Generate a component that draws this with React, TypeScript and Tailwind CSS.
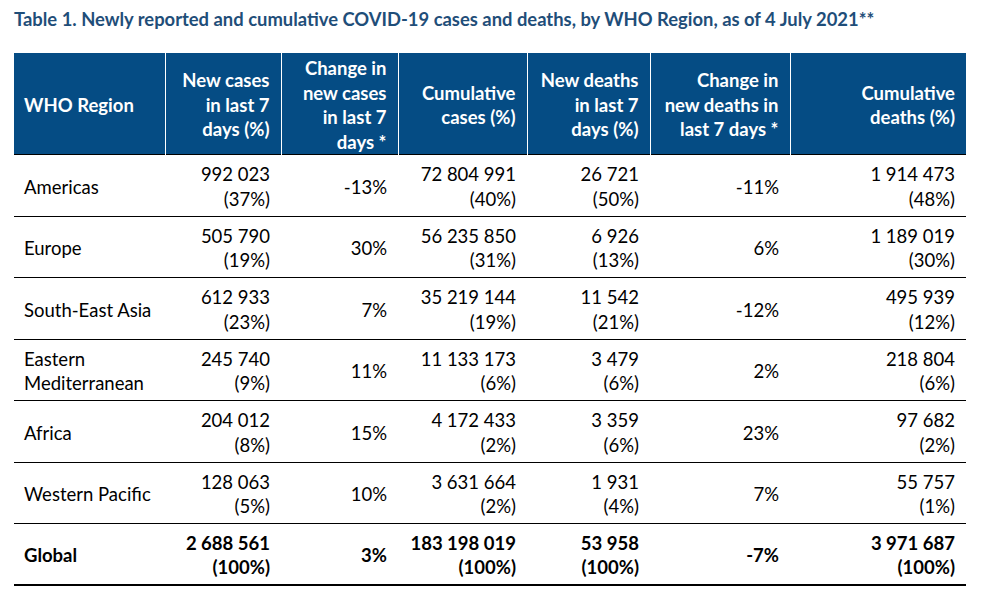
const rows = [
  { region: ['Americas'], nc: '992 023', ncp: '(37%)', chc: '-13%', cc: '72 804 991', ccp: '(40%)', nd: '26 721', ndp: '(50%)', chd: '-11%', cd: '1 914 473', cdp: '(48%)' },
  { region: ['Europe'], nc: '505 790', ncp: '(19%)', chc: '30%', cc: '56 235 850', ccp: '(31%)', nd: '6 926', ndp: '(13%)', chd: '6%', cd: '1 189 019', cdp: '(30%)' },
  { region: ['South-East Asia'], nc: '612 933', ncp: '(23%)', chc: '7%', cc: '35 219 144', ccp: '(19%)', nd: '11 542', ndp: '(21%)', chd: '-12%', cd: '495 939', cdp: '(12%)' },
  { region: ['Eastern', 'Mediterranean'], nc: '245 740', ncp: '(9%)', chc: '11%', cc: '11 133 173', ccp: '(6%)', nd: '3 479', ndp: '(6%)', chd: '2%', cd: '218 804', cdp: '(6%)' },
  { region: ['Africa'], nc: '204 012', ncp: '(8%)', chc: '15%', cc: '4 172 433', ccp: '(2%)', nd: '3 359', ndp: '(6%)', chd: '23%', cd: '97 682', cdp: '(2%)' },
  { region: ['Western Pacific'], nc: '128 063', ncp: '(5%)', chc: '10%', cc: '3 631 664', ccp: '(2%)', nd: '1 931', ndp: '(4%)', chd: '7%', cd: '55 757', cdp: '(1%)' },
];

const headers = [
  ['WHO Region'],
  ['New cases', 'in last 7', 'days (%)'],
  ['Change in', 'new cases', 'in last 7', 'days *'],
  ['Cumulative', 'cases (%)'],
  ['New deaths', 'in last 7', 'days (%)'],
  ['Change in', 'new deaths in', 'last 7 days *'],
  ['Cumulative', 'deaths (%)'],
];

const widths = ['w-[151px]', 'w-[116px]', 'w-[117px]', 'w-[129px]', 'w-[123px]', 'w-[140px]', 'w-[176px]'];

function Two({ a, b }: { a: string; b: string }) {
  return (
    <div className="flex flex-col items-end">
      <span>{a}</span>
      <span>{b}</span>
    </div>
  );
}

export default function App() {
  return (
    <div className="bg-white w-[983px] h-[589px] font-['Lato','Liberation_Sans',sans-serif] text-black">
      <h1 className="pl-[14px] pt-[8px] h-[53px] text-[18.4px] leading-[22px] font-bold text-[#1f4e79]">
        Table 1. Newly reported and cumulative COVID-19 cases and deaths, by WHO Region, as of 4 July 2021**
      </h1>
      <table className="ml-[14px] table-fixed border-collapse text-[18.5px] leading-[24.5px]">
        <thead>
          <tr className="h-[101px] bg-[#054c84] text-white font-bold border-b border-black">
            {headers.map((h, i) => (
              <th
                key={i}
                className={`${widths[i]} ${i === 0 ? 'text-left pl-[10px]' : 'text-right pr-[11px]'} ${i < 6 ? 'border-r border-white' : ''} pt-[3px] font-bold align-middle`}
              >
                {h.map((l) => (
                  <div key={l}>{l}</div>
                ))}
              </th>
            ))}
          </tr>
        </thead>
        <tbody>
          {rows.map((r) => (
            <tr key={r.region[0]} className="h-[61.5px] border-b border-black [&>td]:pt-[3px]">
              <td className="pl-[10px] align-middle">
                {r.region.map((l) => (
                  <div key={l}>{l}</div>
                ))}
              </td>
              <td className="pr-[11px]"><Two a={r.nc} b={r.ncp} /></td>
              <td className="pr-[11px] text-right">{r.chc}</td>
              <td className="pr-[11px]"><Two a={r.cc} b={r.ccp} /></td>
              <td className="pr-[11px]"><Two a={r.nd} b={r.ndp} /></td>
              <td className="pr-[11px] text-right">{r.chd}</td>
              <td className="pr-[11px]"><Two a={r.cd} b={r.cdp} /></td>
            </tr>
          ))}
          <tr className="h-[61px] border-b-2 border-black font-bold [&>td]:pt-[3px]">
            <td className="pl-[10px]">Global</td>
            <td className="pr-[11px]"><Two a="2 688 561" b="(100%)" /></td>
            <td className="pr-[11px] text-right">3%</td>
            <td className="pr-[11px]"><Two a="183 198 019" b="(100%)" /></td>
            <td className="pr-[11px]"><Two a="53 958" b="(100%)" /></td>
            <td className="pr-[11px] text-right">-7%</td>
            <td className="pr-[11px]"><Two a="3 971 687" b="(100%)" /></td>
          </tr>
        </tbody>
      </table>
    </div>
  );
}
